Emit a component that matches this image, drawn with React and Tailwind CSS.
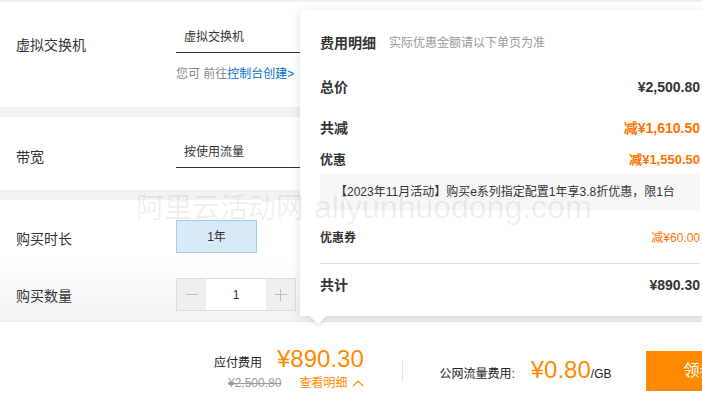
import React from "react";

const F = { fontFamily: '"Liberation Sans", "Noto Sans CJK SC", sans-serif' };

function Row({ label, value, className = "", labelClass = "", valueClass = "" }) {
  return (
    <div className={"flex items-center justify-between h-[22px] " + className}>
      <span className={labelClass}>{label}</span>
      <span className={valueClass}>{value}</span>
    </div>
  );
}

export default function App() {
  return (
    <div
      className="relative w-[702px] h-[395px] overflow-hidden bg-[#f1f2f4] text-[#333]"
      style={F}
    >
      <div className="h-[2px]" />
      {/* Section 1 */}
      <div className="h-[105px] bg-white flex">
        <div className="w-[176px] pl-4 pt-[33px] text-[14px] leading-[20px]">虚拟交换机</div>
        <div className="pt-[20px]">
          <div className="w-[140px] h-[31px] border-b border-[#333] pl-2 flex items-center text-[12px]">
            虚拟交换机
          </div>
          <div className="mt-[13px] text-[12px] leading-[16px] text-[#888]">
            您可 前往<span className="text-[#0070cc]">控制台创建&gt;</span>
          </div>
        </div>
      </div>
      <div className="h-[10px]" />
      {/* Section 2 */}
      <div className="h-[73px] bg-white flex">
        <div className="w-[176px] pl-4 pt-[30px] text-[14px] leading-[20px]">带宽</div>
        <div className="pt-[20px]">
          <div className="w-[140px] h-[31px] border-b border-[#333] pl-2 flex items-center text-[12px]">
            按使用流量
          </div>
        </div>
      </div>
      <div className="h-[10px]" />
      {/* Section 3 */}
      <div className="h-[121px] pt-[20px] bg-[linear-gradient(180deg,#ffffff_50%,#f3f3f3_100%)]">
        <div className="flex items-center h-[33px]">
          <div className="w-[176px] pl-4 pt-[4px] text-[14px] leading-[20px]">购买时长</div>
          <div className="w-[81px] h-[33px] bg-[#d8e9f8] border border-[#a9cdee] flex items-center justify-center text-[12px]">
            1年
          </div>
        </div>
        <div className="flex items-center h-[33px] mt-[25px]">
          <div className="w-[176px] pl-4 pt-[3px] text-[14px] leading-[20px]">购买数量</div>
          <div className="w-[120px] h-[33px] border border-[#dcdcdc] flex bg-white">
            <div className="w-[29px] bg-[#efefef] flex items-center justify-center">
              <div className="w-[12px] h-px bg-[#bdbdbd]" />
            </div>
            <div className="flex-1 flex items-center justify-center text-[12px]">1</div>
            <div className="w-[29px] bg-[#efefef] flex items-center justify-center relative">
              <div className="w-[12px] h-px bg-[#bdbdbd]" />
              <div className="absolute w-px h-[12px] bg-[#bdbdbd]" />
            </div>
          </div>
        </div>
      </div>
      {/* Bottom bar */}
      <div className="relative z-10 h-[74px] bg-white border-t border-[#ececec] flex items-start pl-[214px] whitespace-nowrap">
        <div className="mt-[25px] flex flex-col shrink-0">
          <div className="flex items-baseline">
            <span className="text-[12px] leading-[16px] text-[#222]">应付费用</span>
            <span className="ml-[15px] text-[24px] leading-[24px] text-[#ff8a00]">¥890.30</span>
          </div>
          <div className="flex items-center mt-[4px] pl-[14px] text-[12px] leading-[16px]">
            <span className="text-[#999] line-through">¥2,500.80</span>
            <span className="ml-[18px] text-[#ff8a00]">查看明细</span>
            <svg width="12" height="8" viewBox="0 0 12 8" className="ml-[5px]">
              <polyline points="1,7 6,2 11,7" fill="none" stroke="#ff8a00" strokeWidth="1.2" />
            </svg>
          </div>
        </div>
        <div className="ml-[38px] mt-[38px] w-px h-[22px] bg-[#e3e3e3] shrink-0" />
        <div className="ml-[36px] mt-[36px] flex items-baseline shrink-0">
          <span className="text-[12px] leading-[16px] text-[#222]">公网流量费用:</span>
          <span className="ml-[16px] text-[24px] leading-[24px] text-[#ff8a00]">¥0.80</span>
          <span className="text-[12px] leading-[16px] text-[#222]">/GB</span>
        </div>
        <div className="ml-[35px] mt-[29px] h-[40px] w-[140px] shrink-0 bg-[#ff8a00] text-white text-[16px] flex items-center pl-[37px]">
          领券购买
        </div>
      </div>

      {/* Popover */}
      <div className="absolute z-20 left-[300px] top-[10px] w-[420px] h-[306px] bg-white rounded-tl-[4px] shadow-[0_2px_10px_rgba(0,0,0,0.13)] px-5">
        <div className="h-[66px] flex items-center">
          <span className="text-[14px] font-bold">费用明细</span>
          <span className="ml-[13px] text-[12px] text-[#999]">实际优惠金额请以下单页为准</span>
        </div>
        <Row label="总价" value="¥2,500.80" labelClass="text-[14px] font-bold" valueClass="text-[14px] font-bold" />
        <Row
          className="mt-[19px]"
          label="共减"
          value="减¥1,610.50"
          labelClass="text-[14px] font-bold"
          valueClass="text-[14px] font-bold text-[#ff7300]"
        />
        <Row
          className="mt-[10px]"
          label="优惠"
          value="减¥1,550.50"
          labelClass="text-[13px] font-bold"
          valueClass="text-[13px] font-bold text-[#ff7300]"
        />
        <div className="mt-[3px] h-[36px] bg-[#f7f7f7] flex items-center pl-[15px] text-[12px]">
          【2023年11月活动】购买e系列指定配置1年享3.8折优惠，限1台
        </div>
        <Row
          className="mt-[17px]"
          label="优惠券"
          value="减¥60.00"
          labelClass="text-[12px] font-bold"
          valueClass="text-[12px] text-[#ff7300]"
        />
        <div className="mt-[14px] h-px bg-[#dedede]" />
        <Row
          className="mt-[10px]"
          label="共计"
          value="¥890.30"
          labelClass="text-[14px] font-bold"
          valueClass="text-[14px] font-bold"
        />
        <div className="absolute left-[12px] top-[300px] w-[12px] h-[12px] bg-white rotate-45 shadow-[2px_2px_3px_rgba(0,0,0,0.08)]" />
      </div>

      {/* Watermark */}
      <div className="absolute z-30 left-[136px] top-[191px] whitespace-nowrap pointer-events-none text-[rgba(0,0,0,0.07)] flex items-baseline">
        <span className="text-[28px] leading-[32px]">阿里云活动网</span>
        <span className="ml-[10px] text-[32px] leading-[32px]">aliyunhuodong.com</span>
      </div>
    </div>
  );
}
